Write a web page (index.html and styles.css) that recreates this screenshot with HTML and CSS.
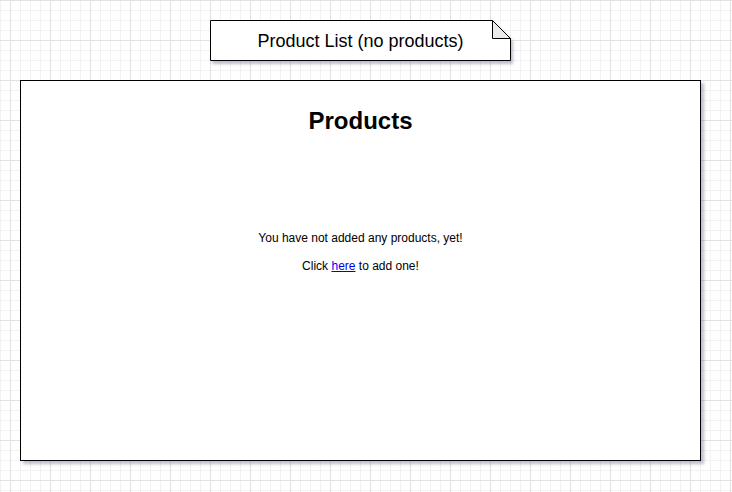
FILE: index.html
```
<!DOCTYPE html>
<html>
<head>
<meta charset="utf-8">
<link rel="stylesheet" href="styles.css">
</head>
<body>
<div class="canvas">
  <div class="note">
    <svg class="note-shape" width="301" height="41" viewBox="0 0 301 41">
      <path d="M0.5 0.5 H282.5 L300.5 18.5 V40.5 H0.5 Z" fill="#ffffff" stroke="#000000" stroke-width="1"/>
      <path d="M282.5 0.5 V18.5 H300.5 Z" fill="#ebebeb" stroke="#000000" stroke-width="1" stroke-linejoin="miter"/>
    </svg>
    <span class="note-text">Product List (no products)</span>
  </div>
  <div class="frame">
    <h1 class="title">Products</h1>
    <div class="empty">
      <p class="msg">You have not added any products, yet!</p>
      <p class="msg">Click <a class="link" href="#">here</a> to add one!</p>
    </div>
  </div>
</div>
</body>
</html>
```
FILE: styles.css
```
html, body {
  margin: 0;
  padding: 0;
}
body {
  width: 732px;
  height: 492px;
  overflow: hidden;
  font-family: "Liberation Sans", Arial, sans-serif;
  background-color: #ffffff;
  background-image:
    linear-gradient(to right, #e2e2e2 1px, transparent 1px),
    linear-gradient(to bottom, #e2e2e2 1px, transparent 1px),
    linear-gradient(to right, #f2f2f2 1px, transparent 1px),
    linear-gradient(to bottom, #f2f2f2 1px, transparent 1px);
  background-size: 40px 40px, 40px 40px, 10px 10px, 10px 10px;
  background-position: 10px 0, 10px 0, 10px 0, 10px 0;
}
.canvas {
  display: flex;
  flex-direction: column;
  align-items: flex-start;
  padding: 20px 0 0 0;
}
.note {
  position: relative;
  margin-left: 210px;
  width: 301px;
  height: 41px;
  display: flex;
  align-items: center;
  justify-content: center;
}
.note-shape {
  position: absolute;
  left: 0;
  top: 0;
  filter: drop-shadow(2px 3px 1.5px rgba(40, 40, 90, 0.3));
}
.note-text {
  position: relative;
  font-size: 18px;
  color: #000000;
  padding-top: 1px;
}
.frame {
  margin-top: 19px;
  margin-left: 20px;
  width: 681px;
  height: 381px;
  box-sizing: border-box;
  border: 1px solid #000000;
  background: #ffffff;
  box-shadow: 3px 3px 3px rgba(40, 40, 100, 0.3);
  display: flex;
  flex-direction: column;
  align-items: center;
}
.title {
  margin: 26px 0 0 0;
  font-size: 24px;
  font-weight: bold;
  line-height: 28px;
}
.empty {
  margin-top: 96px;
  display: flex;
  flex-direction: column;
  align-items: center;
  gap: 14px;
}
.msg {
  margin: 0;
  font-size: 12px;
  line-height: 14px;
}
.link {
  color: #0000ee;
  text-decoration: underline;
}
```
